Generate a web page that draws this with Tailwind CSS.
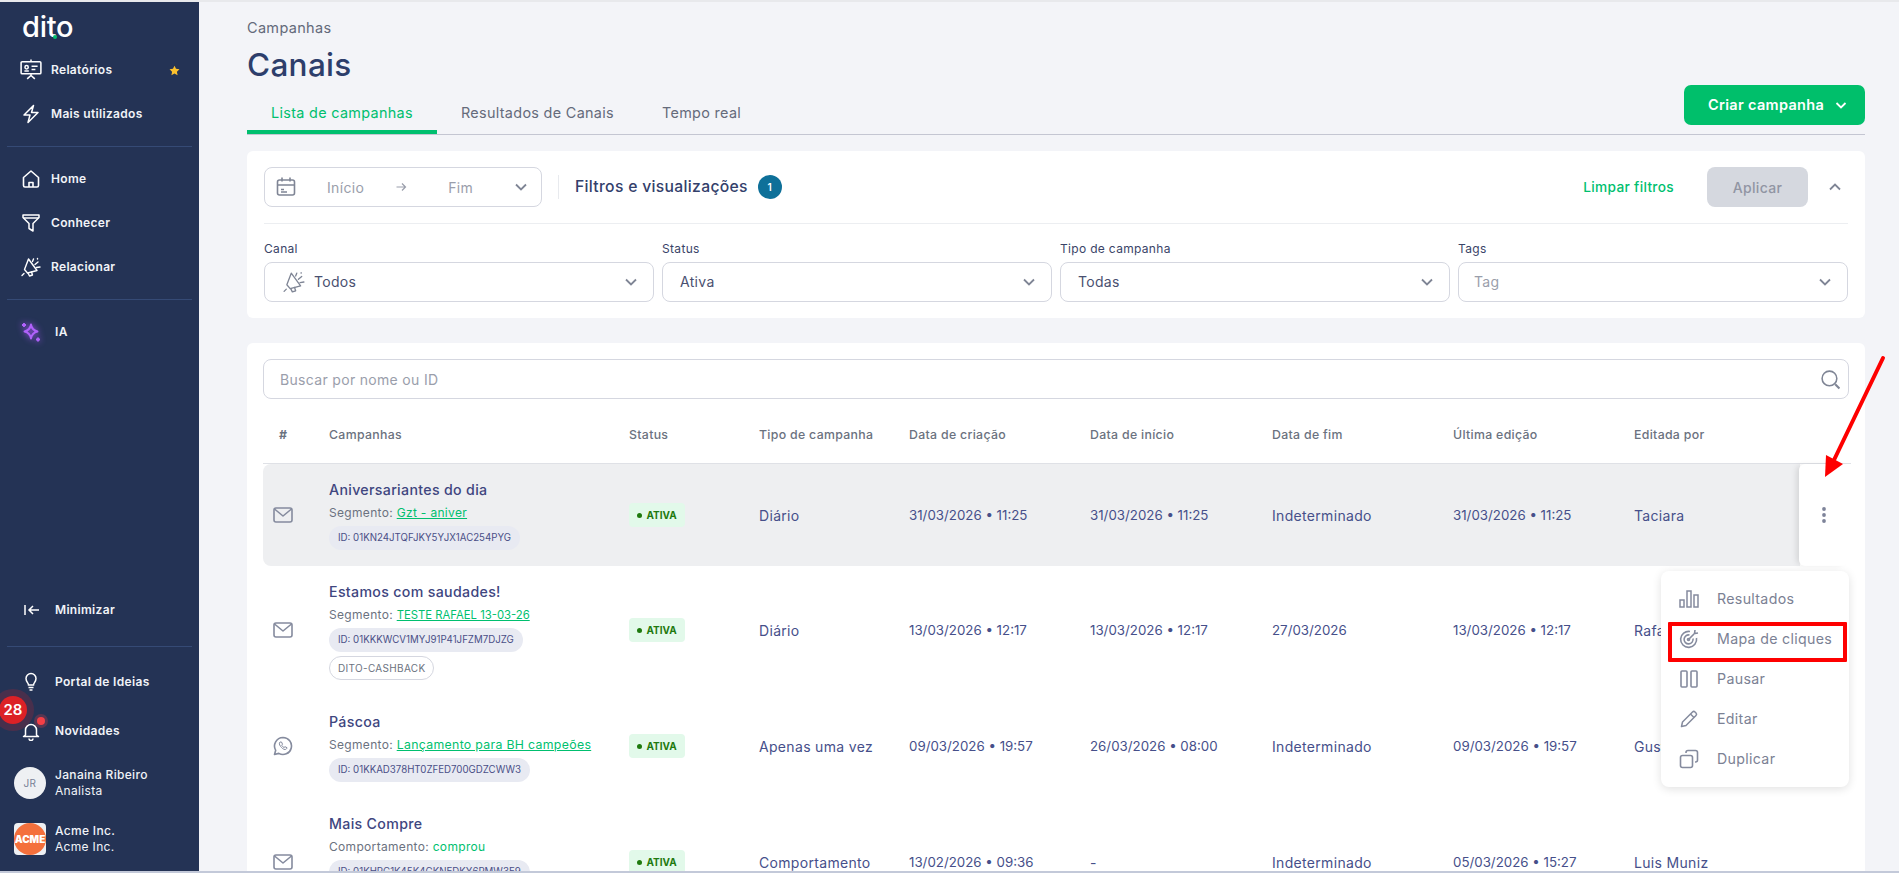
<!DOCTYPE html>
<html lang="pt-BR">
<head>
<meta charset="utf-8">
<title>Canais</title>
<script src="https://cdn.jsdelivr.net/npm/@tailwindcss/browser@4"></script>
</head>
<body class="font-['Inter',sans-serif] tracking-[0.02em]">
<div class="relative flex h-[873px] w-[1899px] overflow-hidden border-y-2 border-t-[#e8e9ec] border-b-[#c3c9d9] bg-[#f3f4f8]">

  <!-- Sidebar -->
  <aside class="relative flex w-[199px] shrink-0 flex-col bg-[#243355] text-[#f1f3f8]">
    <div class="relative h-[46px] pl-[22px] pt-[10px] text-[29px] font-medium leading-[30px] tracking-[-0.01em] text-white">dito<span class="absolute left-[53px] top-[33px] h-[4px] w-[4px] rounded-full bg-[#00bf6f]"></span></div>
    <div class="flex h-[44px] items-center pl-[20px] pr-[19px] text-[12px] font-semibold">
      <svg class="mr-[9px] h-[22px] w-[22px]" viewBox="0 0 20 20" fill="none" stroke="#fff" stroke-width="1.4"><rect x="1" y="2.500" width="18" height="11" rx="1"/><circle cx="6" cy="7.500" r="1.500"/><path d="M4 11h4M10.500 6.500h5.500M10.500 9.500h3.500M10 .5v2M10 13.500v2M6.500 18l3.500-3 3.500 3"/></svg>
      <span class="flex-1">Relatórios</span>
      <svg class="h-[11px] w-[11px]" viewBox="0 0 24 24" fill="#fcc12d"><path d="M12 1.500l3.300 6.900 7.500 1-5.500 5.200 1.400 7.500L12 18.400l-6.700 3.700 1.400-7.500L1.200 9.400l7.500-1z"/></svg>
    </div>
    <div class="flex h-[44px] items-center pl-[21px] text-[12px] font-semibold">
      <svg class="mr-[10px] h-[20px] w-[20px]" viewBox="0 0 20 20" fill="none" stroke="#fff" stroke-width="1.500" stroke-linejoin="round"><path d="M12.500 1.500L3 11h6l-2 7.500L17 8.500h-6.500z"/></svg>
      <span>Mais utilizados</span>
    </div>
    <div class="mx-[7px] mb-[10px] mt-[10px] h-px bg-[#354a75]"></div>
    <div class="flex h-[44px] items-center pl-[21px] text-[12px] font-semibold">
      <svg class="mr-[10px] h-[20px] w-[20px]" viewBox="0 0 20 20" fill="none" stroke="#fff" stroke-width="1.600" stroke-linejoin="round"><path d="M2.500 8.500L10 2l7.500 6.500v8a1.500 1.500 0 0 1-1.500 1.500H4a1.500 1.500 0 0 1-1.500-1.500z"/><path d="M8 18v-4.500h4V18"/></svg>
      <span>Home</span>
    </div>
    <div class="flex h-[44px] items-center pl-[21px] text-[12px] font-semibold">
      <svg class="mr-[10px] h-[20px] w-[20px]" viewBox="0 0 20 20" fill="none" stroke="#fff" stroke-width="1.500" stroke-linejoin="round"><path d="M2 2h16v2.500l-6 6v7.500l-4-2.500v-5l-6-6z"/><path d="M2.500 5h15"/></svg>
      <span>Conhecer</span>
    </div>
    <div class="flex h-[44px] items-center pl-[21px] text-[12px] font-semibold">
      <svg class="mr-[10px] h-[20px] w-[20px]" viewBox="0 0 20 20" fill="none" stroke="#fff" stroke-width="1.400" stroke-linejoin="round" stroke-linecap="round"><path d="M7.500 2L16 13.500 6.500 16 3.500 12.500z"/><path d="M7 16l1.500 3 3-1-1-3M1 18.500l2-2M11.500 4.500l1-2.500M14 7.500l3-2.500M15.500 10.500l3.500-.5M16.500 1.500v.5"/></svg>
      <span>Relacionar</span>
    </div>
    <div class="mx-[7px] mb-[10px] mt-[10px] h-px bg-[#354a75]"></div>
    <div class="flex h-[44px] items-center pl-[20px] text-[12px] font-semibold">
      <svg class="mr-[13px] h-[22px] w-[22px] drop-shadow-[0_0_3px_#a855f7]" viewBox="0 0 22 22" fill="none" stroke="#b062fa" stroke-width="1.900" stroke-linejoin="round"><path d="M11 3.500c.6 4 2.500 6 6.500 7-4 1-5.900 3-6.500 7-.6-4-2.500-6-6.500-7 4-1 5.900-3 6.500-7z"/><path d="M4 2v4M2 4h4M18 16.500v4M16 18.500h4"/></svg>
      <span>IA</span>
    </div>
    <div class="flex-1"></div>
    <div class="flex h-[44px] items-center pl-[24px] text-[12px] font-semibold">
      <svg class="mr-[15px] h-[16px] w-[16px]" viewBox="0 0 16 16" fill="none" stroke="#fff" stroke-width="1.500"><path d="M1 3v10M15 8H5M9 4L5 8l4 4"/></svg>
      <span>Minimizar</span>
    </div>
    <div class="mx-[7px] mb-[13px] mt-[14px] h-px bg-[#354a75]"></div>
    <div class="flex h-[44px] items-center pl-[21px] text-[12px] font-semibold">
      <svg class="mr-[14px] h-[20px] w-[20px]" viewBox="0 0 20 20" fill="none" stroke="#fff" stroke-width="1.500"><path d="M7.500 13c0-2-2.500-3-2.500-6.500a5 5 0 0 1 10 0C15 10 12.500 11 12.500 13z"/><path d="M7.500 15.500h5M8.500 18h3"/></svg>
      <span>Portal de Ideias</span>
    </div>
    <div class="relative mt-[5px] flex h-[44px] items-center pl-[21px] text-[12px] font-semibold">
      <svg class="mr-[14px] h-[20px] w-[20px]" viewBox="0 0 20 20" fill="none" stroke="#fff" stroke-width="1.500" stroke-linejoin="round"><path d="M4.500 14V9a5.500 5.500 0 0 1 11 0v5l2 1.500h-15z"/><path d="M8 17.500a2 2 0 0 0 4 0"/></svg>
      <span>Novidades</span>
      <span class="absolute left-[37px] top-[8px] h-[8px] w-[8px] rounded-full bg-[#f43f46] shadow-[0_0_0_3px_rgba(244,63,70,0.25)]"></span>
    </div>
    <div class="mt-[14px] flex h-[32px] items-center pl-[14px] text-[12px] leading-[16px]">
      <span class="mr-[9px] flex h-[32px] w-[32px] items-center justify-center rounded-full bg-[#eef0f3] text-[10px] text-[#7a8296]">JR</span>
      <span><span class="block font-medium">Janaina Ribeiro</span><span class="block">Analista</span></span>
    </div>
    <div class="mt-[24px] flex h-[32px] items-center pl-[14px] text-[12px] leading-[16px]">
      <span class="mr-[9px] flex h-[32px] w-[32px] items-center justify-center rounded-[4px] bg-[#eef0f3]"><span class="flex h-[32px] w-[32px] items-center justify-center rounded-full bg-[#f4703c] text-[10px] font-black tracking-normal text-white">ACME</span></span>
      <span><span class="block font-medium">Acme Inc.</span><span class="block">Acme Inc.</span></span>
    </div>
    <div class="h-[16px]"></div>
    <span class="absolute left-[-1px] top-[694px] flex h-[28px] w-[28px] items-center justify-center rounded-full bg-[#dc2126] text-[15px] font-semibold tracking-normal text-white shadow-[0_0_0_7px_rgba(220,33,38,0.2)]">28</span>
  </aside>

  <!-- Main -->
  <main class="relative flex min-w-0 flex-1 flex-col pl-[48px] pr-[34px] pt-[16px]">
    <div class="text-[14.500px] leading-[20px] text-[#636a7a]">Campanhas</div>
    <h1 class="mt-[7px] text-[31.500px] font-medium leading-[40px] tracking-[0.01em] text-[#2d3e6b]">Canais</h1>
    <div class="flex h-[50px] items-start justify-between border-b border-[#c4c6d2]">
      <div class="flex self-end text-[14.400px] leading-[20px] text-[#656b7b]">
        <div class="h-[40px] rounded-t-[3px] border-b-4 border-[#00bf6f] px-[24px] pt-[9px] text-[#00bf6f]">Lista de campanhas</div>
        <div class="h-[40px] px-[24px] pt-[9px]">Resultados de Canais</div>
        <div class="h-[40px] px-[24px] pt-[9px]">Tempo real</div>
      </div>
      <button class="flex h-[40px] w-[181px] items-center justify-between rounded-[7px] bg-[#00bf6b] pl-[24px] pr-[17px] text-[14.500px] font-semibold text-white">
        <span>Criar campanha</span>
        <svg class="h-[14px] w-[14px]" viewBox="0 0 14 14" fill="none" stroke="#fff" stroke-width="1.800"><path d="M2.500 5l4.500 4.500L11.500 5"/></svg>
      </button>
    </div>

    <!-- Filters -->
    <section class="mt-[16px] h-[167px] shrink-0 rounded-[6px] bg-white px-[17px] pt-[16px]">
      <div class="flex h-[57px] items-start border-b border-[#eceef1]">
        <div class="flex h-[40px] w-[278px] items-center rounded-[8px] border border-[#d5d7e0] pl-[11px] pr-[12px] text-[14px] text-[#9a9eab]">
          <svg class="h-[20px] w-[20px]" viewBox="0 0 20 20" fill="none" stroke="#7f8595" stroke-width="1.600"><rect x="1.500" y="3" width="17" height="15" rx="2"/><path d="M1.500 8h17M6 .5v4M14 .5v4M5 12.500h3M5 15h6" /></svg>
          <span class="ml-[31px]">Início</span>
          <svg class="ml-[31px] h-[12px] w-[12px]" viewBox="0 0 12 12" fill="none" stroke="#9a9eab" stroke-width="1.200"><path d="M1.500 6h9M7 2.500L10.500 6 7 9.500"/></svg>
          <span class="ml-[41px]">Fim</span>
          <svg class="ml-auto h-[16px] w-[16px]" viewBox="0 0 16 16" fill="none" stroke="#7f8595" stroke-width="1.800"><path d="M3 5.500l5 5 5-5"/></svg>
        </div>
        <div class="ml-[16px] mt-[8px] h-[24px] w-px bg-[#e8eaee]"></div>
        <div class="ml-[16px] mt-[8px] text-[15.700px] font-medium leading-[24px] text-[#33406b]">Filtros e visualizações</div>
        <div class="ml-[10px] mt-[8px] flex h-[24px] w-[24px] items-center justify-center rounded-full bg-[#0e7099] text-[10px] font-semibold text-white">1</div>
        <div class="ml-auto flex items-start pr-[5px]">
          <span class="mt-[8px] text-[13.700px] font-medium leading-[24px] text-[#00bf6f]">Limpar filtros</span>
          <button class="ml-[33px] h-[40px] w-[101px] rounded-[8px] bg-[#d5d8df] text-[14px] font-medium text-[#9195a3]">Aplicar</button>
          <svg class="ml-[19px] mt-[12px] h-[16px] w-[16px]" viewBox="0 0 16 16" fill="none" stroke="#7f8595" stroke-width="1.800"><path d="M3 10.500l5-5 5 5"/></svg>
        </div>
      </div>
      <div class="mt-[17px] grid grid-cols-[390px_390px_390px_390px] gap-x-[8px] text-[12px] leading-[16px] text-[#3a4468]">
        <div>
          <div class="mb-[5px]">Canal</div>
          <div class="flex h-[40px] items-center rounded-[8px] border border-[#d5d7e0] pl-[18px] pr-[14px] text-[14px] text-[#4a5070]">
            <svg class="mr-[9px] h-[22px] w-[22px]" viewBox="0 0 20 20" fill="none" stroke="#7f8595" stroke-width="1.200" stroke-linejoin="round" stroke-linecap="round"><path d="M7.500 2L16 13.500 6.500 16 3.500 12.500z"/><path d="M7 16l1.500 3 3-1-1-3M1 18.500l2-2M11.500 4.500l1-2.500M14 7.500l3-2.500M15.500 10.500l3.500-.5M16.500 1.500v.5"/></svg>
            <span>Todos</span>
            <svg class="ml-auto h-[16px] w-[16px]" viewBox="0 0 16 16" fill="none" stroke="#7f8595" stroke-width="1.800"><path d="M3 5.500l5 5 5-5"/></svg>
          </div>
        </div>
        <div>
          <div class="mb-[5px]">Status</div>
          <div class="flex h-[40px] items-center rounded-[8px] border border-[#d5d7e0] pl-[17px] pr-[14px] text-[14px] text-[#4a5070]">
            <span>Ativa</span>
            <svg class="ml-auto h-[16px] w-[16px]" viewBox="0 0 16 16" fill="none" stroke="#7f8595" stroke-width="1.800"><path d="M3 5.500l5 5 5-5"/></svg>
          </div>
        </div>
        <div>
          <div class="mb-[5px]">Tipo de campanha</div>
          <div class="flex h-[40px] items-center rounded-[8px] border border-[#d5d7e0] pl-[17px] pr-[14px] text-[14px] text-[#4a5070]">
            <span>Todas</span>
            <svg class="ml-auto h-[16px] w-[16px]" viewBox="0 0 16 16" fill="none" stroke="#7f8595" stroke-width="1.800"><path d="M3 5.500l5 5 5-5"/></svg>
          </div>
        </div>
        <div>
          <div class="mb-[5px]">Tags</div>
          <div class="flex h-[40px] items-center rounded-[8px] border border-[#d5d7e0] pl-[15px] pr-[14px] text-[14px] text-[#9a9eab]">
            <span>Tag</span>
            <svg class="ml-auto h-[16px] w-[16px]" viewBox="0 0 16 16" fill="none" stroke="#7f8595" stroke-width="1.800"><path d="M3 5.500l5 5 5-5"/></svg>
          </div>
        </div>
      </div>
    </section>

    <!-- Table card -->
    <section class="relative mt-[25px] min-h-0 flex-1 overflow-hidden rounded-t-[6px] bg-white px-[16px] pt-[16px]">
      <div class="flex h-[40px] items-center justify-between rounded-[8px] border border-[#d5d7e0] pl-[16px] pr-[7px] text-[14px] text-[#9a9eab]">
        <span>Buscar por nome ou ID</span>
        <svg class="h-[21px] w-[21px]" viewBox="0 0 20 20" fill="none" stroke="#7f8595" stroke-width="1.500"><circle cx="9" cy="9" r="7"/><path d="M14.500 14.500l4 4" stroke-width="2"/></svg>
      </div>

      <div class="grid h-[65px] w-[1588px] grid-cols-[66px_300px_130px_150px_181px_182px_181px_181px_1fr] items-center border-b border-[#dfe1e6] pt-[8px] text-[12.300px] font-medium text-[#6b7280]">
        <div class="pl-[16px] font-bold">#</div><div>Campanhas</div><div>Status</div><div>Tipo de campanha</div><div>Data de criação</div><div>Data de início</div><div>Data de fim</div><div>Última edição</div><div>Editada por</div>
      </div>

      <!-- Row 1 -->
      <div class="relative grid h-[102px] w-[1537px] grid-cols-[66px_300px_130px_150px_181px_182px_181px_181px_1fr] items-center rounded-l-[8px] bg-[#eeeff1] text-[14px] text-[#464f8a]">
        <div class="pl-[10px]"><svg class="h-[20px] w-[20px]" viewBox="0 0 20 20" fill="none" stroke="#858b9e" stroke-width="1.600" stroke-linejoin="round"><rect x="1" y="3" width="18" height="14" rx="2"/><path d="M1.500 4l8.500 7 8.500-7"/></svg></div>
        <div class="self-start pt-[16px]">
          <div class="text-[14.200px] font-medium leading-[20px] text-[#40467f]">Aniversariantes do dia</div>
          <div class="mt-[4px] text-[12px] leading-[18px] text-[#6b7280]">Segmento: <span class="text-[#00bf6f] underline">Gzt - aniver</span></div>
          <div class="mt-[4px] flex h-[24px] w-fit items-center rounded-full bg-[#e8eaf2] px-[9px] text-[9.700px] tracking-normal text-[#4a4f87]">ID: 01KN24JTQFJKY5YJX1AC254PYG</div>
        </div>
        <div><span class="flex h-[24px] w-[56px] items-center justify-center gap-[4px] rounded-[4px] bg-[#e2f9ea] text-[10px] font-bold tracking-normal text-[#1f7a0f]"><i class="h-[5px] w-[5px] rounded-full bg-[#1f7a0f]"></i>ATIVA</span></div>
        <div>Diário</div><div class="pt-[1px] text-[13.300px] tracking-normal">31/03/2026 • 11:25</div><div class="pt-[1px] text-[13.300px] tracking-normal">31/03/2026 • 11:25</div><div>Indeterminado</div><div class="pt-[1px] text-[13.300px] tracking-normal">31/03/2026 • 11:25</div><div>Taciara</div>
      </div>

      <!-- Row 2 -->
      <div class="-mt-[1px] grid h-[130px] w-[1537px] grid-cols-[66px_300px_130px_150px_181px_182px_181px_181px_1fr] items-center text-[14px] text-[#464f8a]">
        <div class="pl-[10px]"><svg class="h-[20px] w-[20px]" viewBox="0 0 20 20" fill="none" stroke="#858b9e" stroke-width="1.600" stroke-linejoin="round"><rect x="1" y="3" width="18" height="14" rx="2"/><path d="M1.500 4l8.500 7 8.500-7"/></svg></div>
        <div class="self-start pt-[17px]">
          <div class="text-[14.200px] font-medium leading-[20px] text-[#40467f]">Estamos com saudades!</div>
          <div class="mt-[4px] text-[12px] leading-[18px] text-[#6b7280]">Segmento: <span class="text-[11.300px] tracking-normal text-[#00bf6f] underline">TESTE RAFAEL 13-03-26</span></div>
          <div class="mt-[4px] flex h-[24px] w-fit items-center rounded-full bg-[#e8eaf2] px-[9px] text-[9.700px] tracking-normal text-[#4a4f87]">ID: 01KKKWCV1MYJ91P41JFZM7DJZG</div>
          <div class="mt-[4px] flex h-[24px] w-fit items-center rounded-full border border-[#d5d7e0] px-[8px] text-[10px] text-[#6b7280]">DITO-CASHBACK</div>
        </div>
        <div><span class="flex h-[24px] w-[56px] items-center justify-center gap-[4px] rounded-[4px] bg-[#e2f9ea] text-[10px] font-bold tracking-normal text-[#1f7a0f]"><i class="h-[5px] w-[5px] rounded-full bg-[#1f7a0f]"></i>ATIVA</span></div>
        <div>Diário</div><div class="pt-[1px] text-[13.300px] tracking-normal">13/03/2026 • 12:17</div><div class="pt-[1px] text-[13.300px] tracking-normal">13/03/2026 • 12:17</div><div class="pt-[1px] text-[13.300px] tracking-normal">27/03/2026</div><div class="pt-[1px] text-[13.300px] tracking-normal">13/03/2026 • 12:17</div><div>Rafael</div>
      </div>

      <!-- Row 3 -->
      <div class="grid h-[102px] w-[1537px] grid-cols-[66px_300px_130px_150px_181px_182px_181px_181px_1fr] items-center text-[14px] text-[#464f8a]">
        <div class="pl-[10px]"><svg class="h-[20px] w-[20px]" viewBox="0 0 20 20" fill="none" stroke="#858b9e" stroke-width="1.600" stroke-linejoin="round"><path d="M10 1.500a8.500 8.500 0 0 0-7.300 12.800L1.500 18.500l4.300-1.100A8.500 8.500 0 1 0 10 1.500z"/><path d="M7 6c-1 1-.8 2.500.5 4.300S10.500 13.500 12 13.500c1 0 2-.8 2-1.800l-2-1-1 .8c-1-.4-1.900-1.300-2.300-2.300l.8-1-1-2.200z" stroke-width="1"/></svg></div>
        <div class="self-start pt-[17px]">
          <div class="text-[14.200px] font-medium leading-[20px] text-[#40467f]">Páscoa</div>
          <div class="mt-[4px] text-[12px] leading-[18px] text-[#6b7280]">Segmento: <span class="text-[12.300px] text-[#00bf6f] underline">Lançamento para BH campeões</span></div>
          <div class="mt-[4px] flex h-[24px] w-fit items-center rounded-full bg-[#e8eaf2] px-[9px] text-[9.700px] tracking-normal text-[#4a4f87]">ID: 01KKAD378HT0ZFED700GDZCWW3</div>
        </div>
        <div><span class="flex h-[24px] w-[56px] items-center justify-center gap-[4px] rounded-[4px] bg-[#e2f9ea] text-[10px] font-bold tracking-normal text-[#1f7a0f]"><i class="h-[5px] w-[5px] rounded-full bg-[#1f7a0f]"></i>ATIVA</span></div>
        <div>Apenas uma vez</div><div class="pt-[1px] text-[13.300px] tracking-normal">09/03/2026 • 19:57</div><div class="pt-[1px] text-[13.300px] tracking-normal">26/03/2026 • 08:00</div><div>Indeterminado</div><div class="pt-[1px] text-[13.300px] tracking-normal">09/03/2026 • 19:57</div><div>Gustavo</div>
      </div>

      <!-- Row 4 -->
      <div class="grid h-[130px] w-[1537px] grid-cols-[66px_300px_130px_150px_181px_182px_181px_181px_1fr] items-center text-[14px] text-[#464f8a]">
        <div class="pl-[10px]"><svg class="h-[20px] w-[20px]" viewBox="0 0 20 20" fill="none" stroke="#858b9e" stroke-width="1.600" stroke-linejoin="round"><rect x="1" y="3" width="18" height="14" rx="2"/><path d="M1.500 4l8.500 7 8.500-7"/></svg></div>
        <div class="self-start pt-[17px]">
          <div class="text-[14.200px] font-medium leading-[20px] text-[#40467f]">Mais Compre</div>
          <div class="mt-[4px] text-[12px] leading-[18px] text-[#6b7280]">Comportamento: <span class="text-[#00bf6f]">comprou</span></div>
          <div class="mt-[4px] flex h-[24px] w-fit items-center rounded-full bg-[#e8eaf2] px-[9px] text-[9.700px] tracking-normal text-[#4a4f87]">ID: 01KHPC1K45K4GKNEDKY6PMW3E9</div>
        </div>
        <div><span class="flex h-[24px] w-[56px] items-center justify-center gap-[4px] rounded-[4px] bg-[#e2f9ea] text-[10px] font-bold tracking-normal text-[#1f7a0f]"><i class="h-[5px] w-[5px] rounded-full bg-[#1f7a0f]"></i>ATIVA</span></div>
        <div>Comportamento</div><div class="pt-[1px] text-[13.300px] tracking-normal">13/02/2026 • 09:36</div><div>-</div><div>Indeterminado</div><div class="pt-[1px] text-[13.300px] tracking-normal">05/03/2026 • 15:27</div><div>Luis Muniz</div>
      </div>

      <!-- Row 1 action panel -->
      <div class="absolute left-[1552px] top-[121px] flex h-[102px] w-[49px] items-center justify-center rounded-[6px] bg-white shadow-[-4px_0_6px_-2px_rgba(0,0,0,0.12)]">
        <svg class="h-[16px] w-[6px]" viewBox="0 0 6 16" fill="#7d8399"><circle cx="3" cy="2" r="1.900"/><circle cx="3" cy="8" r="1.900"/><circle cx="3" cy="14" r="1.900"/></svg>
      </div>

      <!-- Action menu -->
      <div class="absolute left-[1414px] top-[228px] flex h-[216px] w-[188px] flex-col rounded-[8px] bg-white pl-[18px] pt-[8px] text-[14.200px] text-[#7b8194] shadow-[0_2px_10px_rgba(0,0,0,0.12)]">
        <div class="flex h-[40px] items-center gap-[18px]"><svg class="h-[20px] w-[20px]" viewBox="0 0 20 20" fill="none" stroke="#858b9e" stroke-width="1.500"><rect x="1" y="11" width="4" height="7"/><rect x="8" y="2" width="4" height="16"/><rect x="15" y="6" width="4" height="12"/></svg>Resultados</div>
        <div class="flex h-[40px] items-center gap-[18px]"><svg class="h-[20px] w-[20px]" viewBox="0 0 20 20" fill="none" stroke="#858b9e" stroke-width="1.600"><path d="M11 2.500A8 8 0 1 0 17.500 9"/><path d="M10.500 6a4.500 4.500 0 1 0 3.500 3.500"/><circle cx="9.500" cy="10.500" r="1"/><path d="M9.500 10.500L16 4M16 1l-.5 3.500L19 4"/></svg>Mapa de cliques</div>
        <div class="flex h-[40px] items-center gap-[18px]"><svg class="h-[20px] w-[20px]" viewBox="0 0 20 20" fill="none" stroke="#858b9e" stroke-width="1.600"><rect x="2" y="2" width="6" height="16" rx="1"/><rect x="12" y="2" width="6" height="16" rx="1"/></svg>Pausar</div>
        <div class="flex h-[40px] items-center gap-[18px]"><svg class="h-[20px] w-[20px]" viewBox="0 0 20 20" fill="none" stroke="#858b9e" stroke-width="1.500" stroke-linejoin="round"><path d="M2.500 17.500l1-4.500L13.500 3a1.800 1.800 0 0 1 2.500 0l1 1a1.800 1.800 0 0 1 0 2.500L7 16.500z"/><path d="M11.500 5l3.500 3.500"/></svg>Editar</div>
        <div class="flex h-[40px] items-center gap-[18px]"><svg class="h-[20px] w-[20px]" viewBox="0 0 20 20" fill="none" stroke="#858b9e" stroke-width="1.600"><rect x="1.500" y="6.500" width="12" height="12" rx="2"/><path d="M7 4V3.500a2 2 0 0 1 2-2h7.500a2 2 0 0 1 2 2V11a2 2 0 0 1-2 2H16"/></svg>Duplicar</div>
      </div>
      <!-- Annotation box -->
      <div class="absolute left-[1421px] top-[279px] h-[40px] w-[179px] rounded-[1px] border-4 border-[#fe0000]"></div>
    </section>
  </main>

  <!-- Annotation arrow -->
  <svg class="absolute left-[1810px] top-[338px] h-[150px] w-[89px]" viewBox="0 0 89 150"><path d="M73 18L24 120" stroke="#fe0000" stroke-width="4" stroke-linecap="round"/><path d="M15 137L16 115L33 124z" fill="#fe0000"/></svg>
</div>
</body>
</html>
